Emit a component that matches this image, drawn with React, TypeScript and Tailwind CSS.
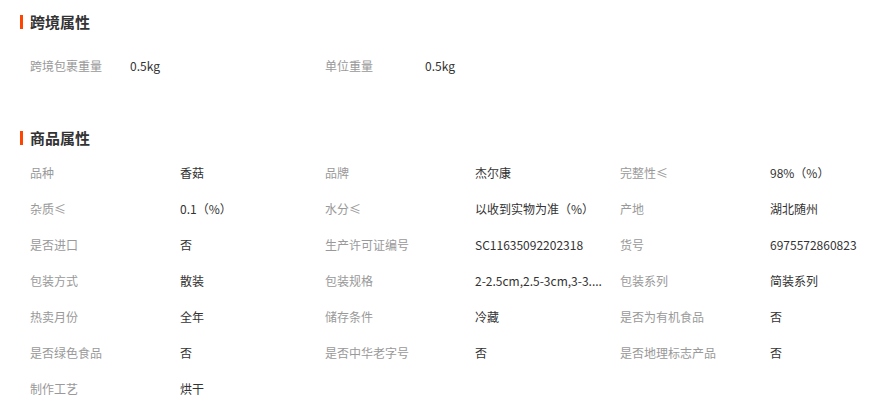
const crossBorder = [
  { label: '跨境包裹重量', value: '0.5kg' },
  { label: '单位重量', value: '0.5kg' },
];

const attrs = [
  { label: '品种', value: '香菇' },
  { label: '品牌', value: '杰尔康' },
  { label: '完整性≤', value: '98%（%）' },
  { label: '杂质≤', value: '0.1（%）' },
  { label: '水分≤', value: '以收到实物为准（%）' },
  { label: '产地', value: '湖北随州' },
  { label: '是否进口', value: '否' },
  { label: '生产许可证编号', value: 'SC11635092202318' },
  { label: '货号', value: '6975572860823' },
  { label: '包装方式', value: '散装' },
  { label: '包装规格', value: '2-2.5cm,2.5-3cm,3-3....' },
  { label: '包装系列', value: '简装系列' },
  { label: '热卖月份', value: '全年' },
  { label: '储存条件', value: '冷藏' },
  { label: '是否为有机食品', value: '否' },
  { label: '是否绿色食品', value: '否' },
  { label: '是否中华老字号', value: '否' },
  { label: '是否地理标志产品', value: '否' },
  { label: '制作工艺', value: '烘干' },
];

function Title({ text }: { text: string }) {
  return (
    <div className="flex items-center h-[20px] pl-5">
      <span className="w-[3px] h-[14px] bg-[#ff4400] mr-[7px]" />
      <h3 className="text-[15px] font-bold text-[#333]">{text}</h3>
    </div>
  );
}

export default function App() {
  return (
    <div
      className="w-[882px] h-[405px] bg-white pt-3 overflow-hidden"
      style={{ fontFamily: '"Microsoft YaHei", "Noto Sans CJK SC", sans-serif' }}
    >
      <Title text="跨境属性" />
      <div className="flex pl-[30px] mt-4">
        {crossBorder.map((item) => (
          <div key={item.label} className="flex w-[295px] h-9 items-center text-xs">
            <span className="w-[100px] text-[#999]">{item.label}</span>
            <span className="text-[#333]">{item.value}</span>
          </div>
        ))}
      </div>

      <div className="mt-[44px]">
        <Title text="商品属性" />
      </div>
      <div className="grid grid-cols-[295px_295px_262px] pl-[30px] mt-[7px]">
        {attrs.map((item) => (
          <div key={item.label} className="flex h-9 items-center text-xs">
            <span className="w-[150px] shrink-0 text-[#999]">{item.label}</span>
            <span className="whitespace-nowrap text-[#333]">{item.value}</span>
          </div>
        ))}
      </div>
    </div>
  );
}
